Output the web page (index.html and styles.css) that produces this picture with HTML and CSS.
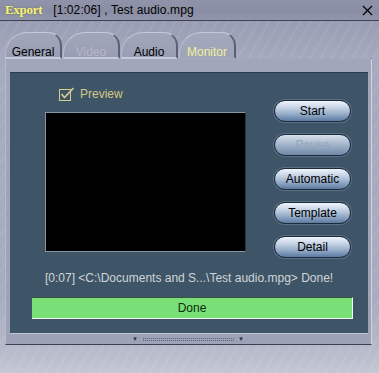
FILE: index.html
```html
<!DOCTYPE html>
<html>
<head>
<meta charset="utf-8">
<link rel="stylesheet" href="styles.css">
</head>
<body>
<div class="win">
  <div class="titlebar">
    <span class="brand">Export</span>
    <span class="title">[1:02:06] , Test audio.mpg</span>
    <svg class="close" width="11" height="11" viewBox="0 0 11 11"><path d="M1 1 L10 10 M10 1 L1 10" stroke="#000" stroke-width="1.2" fill="none"/></svg>
  </div>
  <div class="tabs">
    <div class="tab">General</div>
    <div class="tab disabled">Video</div>
    <div class="tab">Audio</div>
    <div class="tab active">Monitor</div>
    <div class="tabfill"></div>
  </div>
  <div class="frame">
    <div class="panel">
      <div class="preview">
        <svg class="check" width="16" height="14" viewBox="0 0 16 14"><rect x="0.5" y="2.5" width="11" height="11" fill="none" stroke="#d8cc88" stroke-width="1"/><path d="M2.5 7 L5.5 10.5 L14.5 1" stroke="#d8cc88" stroke-width="1.6" fill="none"/></svg>
        <span class="plabel">Preview</span>
      </div>
      <div class="main">
        <div class="video"></div>
        <div class="buttons">
          <div class="btn">Start</div>
          <div class="btn off">Pause</div>
          <div class="btn">Automatic</div>
          <div class="btn">Template</div>
          <div class="btn">Detail</div>
        </div>
      </div>
      <div class="status">[0:07] &lt;C:\Documents and S...\Test audio.mpg&gt; Done!</div>
      <div class="progress">Done</div>
    </div>
    <div class="grip">
      <span class="tri">&#9660;</span>
      <span class="dots"></span>
      <span class="tri">&#9660;</span>
    </div>
  </div>
</div>
</body>
</html>
```
FILE: styles.css
```css
html, body {
  margin: 0;
  padding: 0;
}
body {
  width: 379px;
  height: 373px;
  overflow: hidden;
  font-family: "Liberation Sans", Arial, sans-serif;
  font-size: 12px;
  background:
    repeating-linear-gradient(120deg, rgba(255,255,255,0.06) 0 2px, rgba(0,0,0,0) 2px 9px),
    linear-gradient(180deg, #8a8ea6 0px, #9a9eb4 22px, #a6aabe 60px, #a8acc0 300px, #b4b8c8 345px, #c4c8d4 373px);
}
.win {
  display: flex;
  flex-direction: column;
  height: 373px;
}
.titlebar {
  height: 21px;
  border-bottom: 1px solid #3c4050;
  display: flex;
  align-items: center;
  padding: 0 6px 0 5px;
  box-sizing: border-box;
  background: linear-gradient(180deg, #9094aa, #8a8ea4 60%, #9296ac);
}
.brand {
  font-family: "Liberation Serif", "Times New Roman", serif;
  font-weight: bold;
  font-size: 13px;
  color: #f4f07c;
  text-shadow: 0 0 2px #707050;
  letter-spacing: -0.3px;
}
.title {
  margin-left: 11px;
  color: #000;
  font-size: 12px;
  letter-spacing: 0.1px;
}
.close {
  margin-left: auto;
}
.tabs {
  display: flex;
  margin-top: 11px;
  height: 27px;
  padding-left: 5px;
  box-sizing: border-box;
}
.tab {
  width: 57px;
  height: 27px;
  box-sizing: border-box;
  border-radius: 22px 14px 0 0;
  border-top: 1px solid #c4c8d8;
  border-left: 1px solid #b8bccc;
  border-right: 2px solid #5c6076;
  border-bottom: 2px solid #c6cad8;
  background: linear-gradient(180deg, #a2a6ba, #9a9eb4);
  text-align: center;
  padding-top: 12px;
  color: #000;
  font-size: 12px;
  margin-right: 1px;
}
.tab.disabled {
  color: #b4b8c8;
}
.tab.active {
  color: #f0f098;
  border-bottom: 2px solid transparent;
  background: linear-gradient(180deg, #a4a8bc, #a0a4b8);
}
.tabfill {
  flex: 1;
  border-bottom: 2px solid #c6cad8;
  margin-right: 7px;
  border-right: 1px solid #5c6076;
  margin-top: 26px;
  height: 1px;
}
.frame {
  margin: 0 7px 0 5px;
  padding: 13px 3px 0 4px;
  border-right: 1px solid #d0d4e0;
  border-left: 1px solid #b6bacc;
  border-bottom: 1px solid #3c4050;
  background: linear-gradient(180deg, #a2a6ba, #9ea2b6);
}
.panel {
  background: #3e5467;
  height: 262px;
  box-sizing: border-box;
  border-top: 1px solid #2c3c4c;
  border-bottom: 1px solid #c0c4d4;
  display: flex;
  flex-direction: column;
}
.preview {
  display: flex;
  align-items: center;
  margin: 14px 0 0 49px;
  height: 14px;
}
.check {
  display: block;
}
.plabel {
  margin-left: 5px;
  color: #d4c884;
  font-size: 12px;
}
.main {
  display: flex;
  margin-top: -1px;
}
.video {
  width: 201px;
  height: 140px;
  box-sizing: border-box;
  background: #000;
  border: 1px solid #8894a2;
  border-right-color: #2a3644;
  margin: 12px 0 0 35px;
}
.buttons {
  display: flex;
  flex-direction: column;
  gap: 12px;
  margin-left: 28px;
}
.btn {
  width: 77px;
  height: 22px;
  box-sizing: border-box;
  border-radius: 11px;
  border: 1px solid #1c2a3a;
  background: linear-gradient(180deg, #f0f4fa 0%, #c4d2e4 35%, #8ea6c4 70%, #5c7aa0 100%);
  box-shadow: 0 0 0 1px #5a7088;
  text-align: center;
  line-height: 20px;
  color: #000;
  font-size: 12px;
}
.btn.off {
  color: #94a6bc;
  background: linear-gradient(180deg, #d8e0ea 0%, #b0c0d4 35%, #8ea2bc 70%, #7088a8 100%);
}
.status {
  margin: 13px 0 0 35px;
  color: #d0d4d8;
  font-size: 12px;
  line-height: 14px;
}
.progress {
  margin: 12px 0 0 22px;
  width: 321px;
  height: 22px;
  box-sizing: border-box;
  background: #78e076;
  border-right: 1px solid #f4fff4;
  border-bottom: 1px solid #f4fff4;
  border-top: 1px solid #3a5040;
  text-align: center;
  line-height: 20px;
  color: #0c2a10;
  font-size: 12px;
}
.grip {
  height: 10px;
  display: flex;
  align-items: center;
  justify-content: center;
  padding-right: 2px;
}
.tri {
  font-size: 6px;
  color: #2a3040;
  line-height: 6px;
}
.dots {
  width: 92px;
  height: 4px;
  margin: 0 4px;
  background-image:
    linear-gradient(90deg, #9ea2b6 1px, transparent 1px),
    linear-gradient(180deg, #9ea2b6 1px, #5a6078 1px);
  background-size: 2px 2px;
}
```
